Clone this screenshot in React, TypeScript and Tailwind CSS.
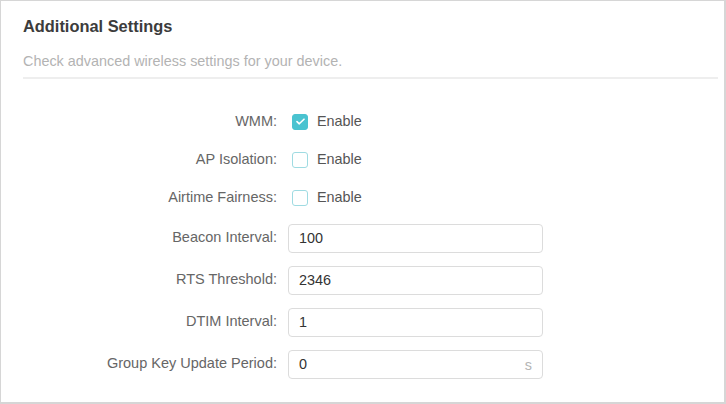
import { useState } from "react"

const checkRows = [
  { label: "WMM", checked: true },
  { label: "AP Isolation", checked: false },
  { label: "Airtime Fairness", checked: false },
]

const inputRows = [
  { label: "Beacon Interval", value: "100" },
  { label: "RTS Threshold", value: "2346" },
  { label: "DTIM Interval", value: "1" },
  { label: "Group Key Update Period", value: "0", unit: "s" },
]

function Checkbox({ checked, onToggle }: { checked: boolean; onToggle: () => void }) {
  return (
    <button
      onClick={onToggle}
      className={
        "flex h-[16px] w-[16px] items-center justify-center rounded-[3px] border " +
        (checked ? "border-[#4ac3d0] bg-[#4ac3d0]" : "border-[#9fdbe2] bg-white")
      }
    >
      {checked && (
        <svg width="9" height="7" viewBox="0 0 9 7" fill="none">
          <path d="M1 3.6 3.3 5.8 8 1.2" stroke="white" strokeWidth="1.6" strokeLinecap="round" strokeLinejoin="round" />
        </svg>
      )}
    </button>
  )
}

export default function App() {
  const [checks, setChecks] = useState(checkRows.map((r) => r.checked))
  const [values, setValues] = useState(inputRows.map((r) => r.value))

  return (
    <div
      className="h-[404px] w-[726px] border-t border-l border-r-2 border-b-2 border-[#d6d6d6] bg-white"
      style={{ fontFamily: '"Liberation Sans", Arial, sans-serif' }}
    >
      <div className="pl-[22px] pr-[6px]">
        <h1 className="pt-[15px] text-[16.4px] font-bold leading-[20px] text-[#3c3c3c]">Additional Settings</h1>
        <p className="mt-[17px] text-[14.4px] leading-[16px] text-[#b3b3b3]">
          Check advanced wireless settings for your device.
        </p>
        <div className="mt-[8px] h-[2px] bg-[#eeeeee]" />
      </div>

      <div className="mt-[24px]">
        {checkRows.map((row, i) => (
          <div key={row.label} className="flex h-[38px] items-center last:h-[37px]">
            <span className="w-[276px] text-right text-[14.5px] text-[#666]">{row.label}:</span>
            <div className="ml-[15px] flex items-center gap-[9px]">
              <Checkbox
                checked={checks[i]}
                onToggle={() => setChecks(checks.map((c, j) => (j === i ? !c : c)))}
              />
              <span className="text-[14.4px] text-[#555]">Enable</span>
            </div>
          </div>
        ))}

        {inputRows.map((row, i) => (
          <div key={row.label} className="flex h-[42px] items-center">
            <span className="w-[276px] text-right text-[14.5px] text-[#666]">{row.label}:</span>
            <div className="relative ml-[11px] w-[255px]">
              <input
                value={values[i]}
                onChange={(e) => setValues(values.map((v, j) => (j === i ? e.target.value : v)))}
                className="h-[29px] w-full rounded-[4px] border border-[#dcdcdc] px-[10px] text-[14.4px] text-[#333] outline-none"
              />
              {row.unit && (
                <span className="absolute right-[11px] top-[5px] text-[14.4px] text-[#b5b5b5]">{row.unit}</span>
              )}
            </div>
          </div>
        ))}
      </div>
    </div>
  )
}
